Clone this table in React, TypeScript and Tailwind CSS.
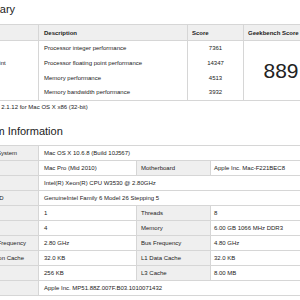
import React from "react";

type InfoRow = {
  label: string;
  value: string;
  label2?: string;
  value2?: string;
};

const summary = [
  { name: "Integer", desc: "Processor integer performance", score: "7361" },
  { name: "Floating Point", desc: "Processor floating point performance", score: "14347" },
  { name: "Memory", desc: "Memory performance", score: "4513" },
  { name: "Stream", desc: "Memory bandwidth performance", score: "3932" },
];

const info: InfoRow[] = [
  { label: "Operating System", value: "Mac OS X 10.6.8 (Build 10J567)" },
  { label: "Model", value: "Mac Pro (Mid 2010)", label2: "Motherboard", value2: "Apple Inc. Mac-F221BEC8" },
  { label: "Processor", value: "Intel(R) Xeon(R) CPU W3530 @ 2.80GHz" },
  { label: "Processor ID", value: "GenuineIntel Family 6 Model 26 Stepping 5" },
  { label: "Processors", value: "1", label2: "Threads", value2: "8" },
  { label: "Cores", value: "4", label2: "Memory", value2: "6.00 GB  1066 MHz DDR3" },
  { label: "Processor Frequency", value: "2.80 GHz", label2: "Bus Frequency", value2: "4.80 GHz" },
  { label: "L1 Instruction Cache", value: "32.0 KB", label2: "L1 Data Cache", value2: "32.0 KB" },
  { label: "L2 Cache", value: "256 KB", label2: "L3 Cache", value2: "8.00 MB" },
  { label: "BIOS", value: "Apple Inc. MP51.88Z.007F.B03.1010071432" },
];

function App() {
  return (
    <div className="w-[300px] h-[300px] overflow-hidden bg-white text-[#222] font-['Liberation_Sans',Arial,sans-serif]">
      <div className="-ml-[36px] w-[354px]">
        {/* Summary */}
        <h2 className="pl-[4px] pt-[3px] pb-[8px] text-[11px] leading-[13px] font-normal whitespace-nowrap">Summary</h2>

        <div className="border-t border-b border-[#d6d6d6] text-[6px] whitespace-nowrap">
          <div className="grid grid-cols-[74px_149px_56px_75px] h-[16px] bg-[#efefef] font-bold leading-[16px] border-b border-[#d6d6d6]">
            <div className="pl-[5px]">Section</div>
            <div className="pl-[5px] border-l border-[#d6d6d6]">Description</div>
            <div className="pl-[4px] border-l border-[#d6d6d6]">Score</div>
            <div className="pl-[4px] border-l border-[#d6d6d6]">Geekbench Score</div>
          </div>
          <div className="grid grid-cols-[74px_149px_56px_75px] leading-[14.75px]">
            <div className="pl-[5px] flex flex-col">
              {summary.map((s) => (
                <span key={s.name}>{s.name}</span>
              ))}
            </div>
            <div className="pl-[5px] border-l border-[#d6d6d6] flex flex-col">
              {summary.map((s) => (
                <span key={s.name}>{s.desc}</span>
              ))}
            </div>
            <div className="border-l border-[#d6d6d6] flex flex-col items-center">
              {summary.map((s) => (
                <span key={s.name}>{s.score}</span>
              ))}
            </div>
            <div className="border-l border-[#d6d6d6] flex items-center justify-center text-[21px] leading-none font-normal">
              889
            </div>
          </div>
        </div>

        <p className="pl-[5px] text-[6px] leading-[12px] whitespace-nowrap">Geekbench 2.1.12 for Mac OS X x86 (32-bit)</p>

        {/* System Information */}
        <h2 className="pl-[4px] pt-[12px] pb-[7px] text-[11px] leading-[13px] font-normal whitespace-nowrap">System Information</h2>

        <div className="border-t border-[#d6d6d6] text-[6px] whitespace-nowrap">
          {info.map((r) => (
            <div key={r.label} className="grid grid-cols-[74px_98px_74px_108px] h-[15px] leading-[14px] border-b border-[#d6d6d6]">
              <div className="pl-[5px] bg-[#efefef]">{r.label}</div>
              {r.label2 ? (
                <>
                  <div className="pl-[5px] border-l border-[#d6d6d6]">{r.value}</div>
                  <div className="pl-[4px] bg-[#efefef] border-l border-[#d6d6d6]">{r.label2}</div>
                  <div className="pl-[3px] border-l border-[#d6d6d6]">{r.value2}</div>
                </>
              ) : (
                <div className="col-span-3 pl-[5px] border-l border-[#d6d6d6]">{r.value}</div>
              )}
            </div>
          ))}
        </div>
      </div>
    </div>
  );
}

export default App;
